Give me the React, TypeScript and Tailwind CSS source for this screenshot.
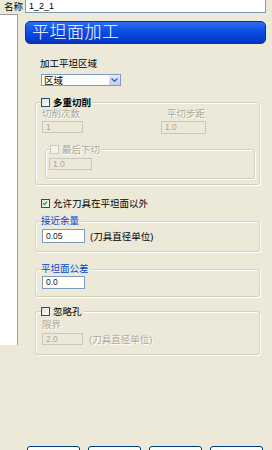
import React from "react"

const font = "font-['Liberation_Sans','Noto_Sans_CJK_SC',sans-serif]"

function Check({ checked = false, disabled = false }: { checked?: boolean; disabled?: boolean }) {
  return (
    <span
      className={
        "relative inline-block h-[9px] w-[9px] shrink-0 border " +
        (disabled
          ? "border-[#cac8bb] bg-[#f4f3ee]"
          : "border-[#1c5180] bg-gradient-to-br from-[#dcdcd7] to-white")
      }
    >
      {checked && (
        <svg viewBox="0 0 9 9" className="absolute inset-0 h-[7px] w-[7px]">
          <path d="M1.5 4.2 L3.3 6 L6.5 2" fill="none" stroke="#21a121" strokeWidth="1.6" />
        </svg>
      )}
    </span>
  )
}

function Field({ value, w, h = 12, disabled = false }: { value: string; w: number; h?: number; disabled?: boolean }) {
  return (
    <div
      style={{ width: w, height: h }}
      className={
        "flex items-center border pl-[3px] text-[8.5px] leading-none " +
        (disabled
          ? "border-[#c9c7ba] bg-[#ece9d8] text-[#aca899]"
          : "border-[#7f9db9] bg-white text-[#222]")
      }
    >
      {value}
    </div>
  )
}

const disabledText = "text-[#aca899] [text-shadow:1px_1px_0_#fff]"
const groupBorder =
  "relative rounded-[3px] border border-[#d0d0bf] shadow-[inset_1px_1px_0_#fff,1px_1px_0_#fff]"

export default function App() {
  return (
    <div className={`flex h-[450px] w-[272px] flex-col overflow-hidden bg-[#ece9d8] text-[9.5px] leading-[11px] text-black ${font}`}>
      {/* name row */}
      <div className="flex h-[13px]">
        <div className="w-[25px] overflow-hidden">
          <div className="-ml-[4px] w-[27px] pt-[1px] text-right text-[9.5px]">名称</div>
        </div>
        <div className="-mt-[1px] flex h-[14px] w-[241px] items-center border border-[#7f9db9] bg-white pl-[3px] text-[9px]">
          1_2_1
        </div>
      </div>

      <div className="mt-[1px] flex">
        <div className="h-[331px] w-[18px] border-r border-t border-[#9d9d9d] bg-white" />

        <div className="ml-[7px] w-[241px]">
          <div className="mt-[7px] flex h-[23px] items-center rounded-[5px] border border-[#0a2fa8] bg-gradient-to-b from-[#2d6cf2] via-[#0a4be2] to-[#0534c0] pl-[6px] text-[17px] font-light tracking-[0.5px] text-white">
            平坦面加工
          </div>

          <div className="ml-[15px] mt-[14px]">加工平坦区域</div>
          <div className="ml-[16px] mt-[5px] flex h-[12px] w-[80px] items-center border border-[#7f9db9] bg-white">
            <span className="flex-1 pl-[2px]">区域</span>
            <span className="flex h-[10px] w-[11px] items-center justify-center rounded-[1px] bg-gradient-to-b from-[#e3ebfd] to-[#b9cdf6]">
              <svg viewBox="0 0 7 4" className="h-[4px] w-[7px]">
                <path d="M0.5 0.5 L3.5 3.3 L6.5 0.5" fill="none" stroke="#4d6185" strokeWidth="1.3" />
              </svg>
            </span>
          </div>

          {/* 多重切削 */}
          <div className={`${groupBorder} ml-[10px] mt-[16px] h-[83px] w-[225px]`}>
            <div className="absolute -top-[6px] left-[5px] flex items-center gap-[3px] bg-[#ece9d8] pr-[2px]">
              <Check />
              <span className="font-bold">多重切削</span>
            </div>
            <div className="flex pt-[5px]">
              <div className="ml-[6px] w-[119px]">
                <div className={disabledText}>切削次数</div>
                <div className="mt-[2px]">
                  <Field value="1" w={41} disabled />
                </div>
              </div>
              <div>
                <div className={`ml-[6px] ${disabledText}`}>平切步距</div>
                <div className="mt-[2px]">
                  <Field value="1.0" w={45} h={13} disabled />
                </div>
              </div>
            </div>
            <div className={`${groupBorder} ml-[9px] mt-[15px] h-[30px] w-[210px]`}>
              <div className="absolute -top-[6px] left-[4px] flex items-center gap-[3px] bg-[#ece9d8] pr-[2px]">
                <Check disabled />
                <span className={disabledText}>最后下切</span>
              </div>
              <div className="ml-[3px] pt-[8px]">
                <Field value="1.0" w={43} disabled />
              </div>
            </div>
          </div>

          <div className="ml-[16px] mt-[13px] flex items-center gap-[3px]">
            <Check checked />
            <span>允许刀具在平坦面以外</span>
          </div>

          {/* 接近余量 */}
          <div className={`${groupBorder} ml-[10px] mt-[12px] h-[31px] w-[225px]`}>
            <div className="absolute -top-[7px] left-[5px] bg-[#ece9d8] pr-[2px] text-[#0046d5]">接近余量</div>
            <div className="ml-[6px] flex items-center gap-[5px] pt-[7px]">
              <Field value="0.05" w={43} h={14} />
              <span>(刀具直径单位)</span>
            </div>
          </div>

          {/* 平坦面公差 */}
          <div className={`${groupBorder} ml-[10px] mt-[17px] h-[28px] w-[225px]`}>
            <div className="absolute -top-[7px] left-[5px] bg-[#ece9d8] pr-[2px] text-[#0046d5]">平坦面公差</div>
            <div className="ml-[6px] pt-[6px]">
              <Field value="0.0" w={43} h={13} />
            </div>
          </div>

          {/* 忽略孔 */}
          <div className={`${groupBorder} ml-[10px] mt-[14px] h-[44px] w-[225px]`}>
            <div className="absolute -top-[6px] left-[5px] flex items-center gap-[3px] bg-[#ece9d8] pr-[2px]">
              <Check />
              <span>忽略孔</span>
            </div>
            <div className={`ml-[6px] pt-[7px] ${disabledText}`}>限界</div>
            <div className="ml-[6px] mt-[3px] flex items-center gap-[6px]">
              <Field value="2.0" w={41} disabled />
              <span className={disabledText}>(刀具直径单位)</span>
            </div>
          </div>
        </div>
      </div>

      {/* buttons */}
      <div className="ml-[27px] mt-[91px] flex gap-[8px]">
        {["计算", "队列", "接受", "取消"].map((b) => (
          <div
            key={b}
            className="flex h-[18px] w-[53px] items-center justify-center rounded-[3px] border border-[#003c74] bg-gradient-to-b from-white to-[#ecebe6] text-[9.5px]"
          >
            {b}
          </div>
        ))}
      </div>
    </div>
  )
}
